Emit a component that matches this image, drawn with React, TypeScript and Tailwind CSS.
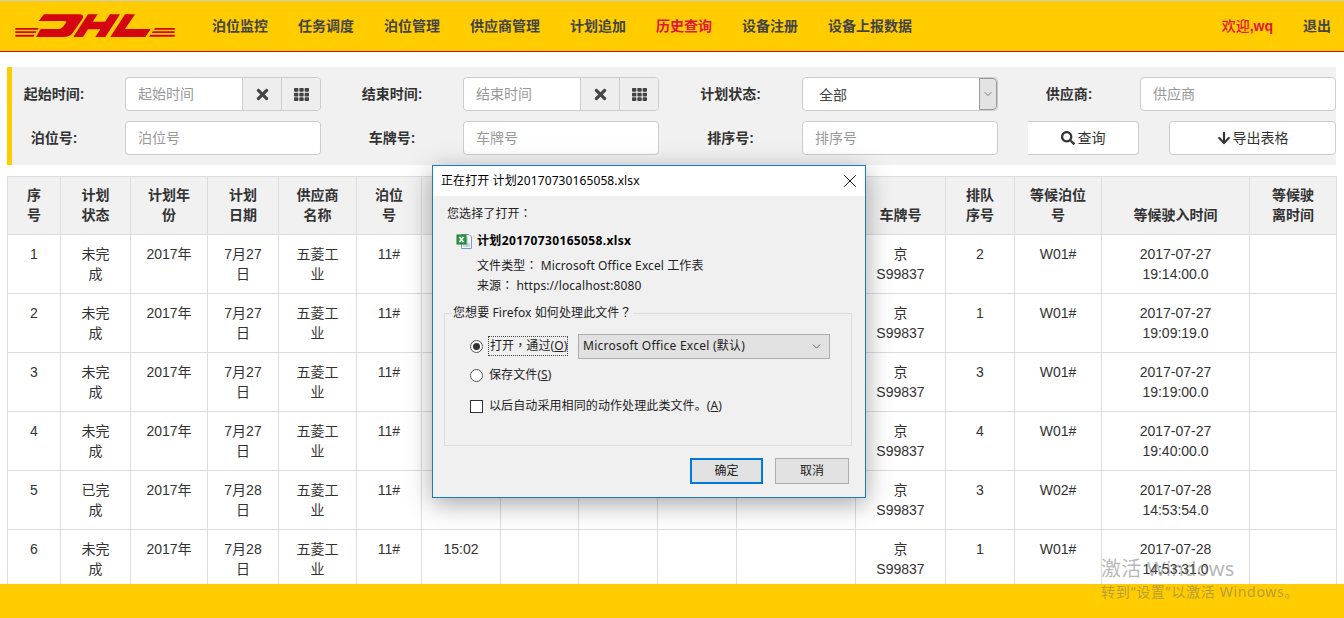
import React from "react";
import { FaTimes, FaTh, FaSearch, FaArrowDown } from "react-icons/fa";
import { ChevronDown, X } from "lucide-react";

const nav = ["泊位监控", "任务调度", "泊位管理", "供应商管理", "计划追加", "历史查询", "设备注册", "设备上报数据"];
const widths = [53, 70, 77, 71, 78, 65, 79, 78, 79, 79, 119, 90, 69, 87, 148, 87];
const heads = ["序号", "计划状态", "计划年份", "计划日期", "供应商名称", "泊位号", "", "", "", "", "", "车牌号", "排队序号", "等候泊位号", "等候驶入时间", "等候驶离时间"];
const rows = [
  ["1", "未完成", "7月27日", "", "2", "W01#", "2017-07-27 19:14:00.0"],
  ["2", "未完成", "7月27日", "", "1", "W01#", "2017-07-27 19:09:19.0"],
  ["3", "未完成", "7月27日", "", "3", "W01#", "2017-07-27 19:19:00.0"],
  ["4", "未完成", "7月27日", "", "4", "W01#", "2017-07-27 19:40:00.0"],
  ["5", "已完成", "7月28日", "", "3", "W02#", "2017-07-28 14:53:54.0"],
  ["6", "未完成", "7月28日", "15:02", "1", "W01#", "2017-07-28 14:53:31.0"],
];

function Logo() {
  return (
    <svg width="175" height="42" viewBox="0 0 525 126" className="shrink-0">
      <g fill="#d40511">
        <path d="M108 28H212Q232 28 223 42L194 84Q186 96 164 96H84L98 72H150Q160 72 165 65L174 53Q178 48 168 48H92Z" />
        <path d="M240 28H269L254 50H291L306 28H336L292 96H262L277 73H240L225 96H196Z" />
        <path d="M351 28H381L351 72H428L412 96H307Z" />
        <path d="M22 69H92L89 74H22ZM22 79H86L83 84H22ZM22 89H80L76 95H22Z" />
        <path d="M441 69H500V74H438ZM434 79H500V84H431ZM427 89H500V95H423Z" />
      </g>
    </svg>
  );
}

function ExcelIcon() {
  return (
    <svg width="17" height="17" viewBox="0 0 17 17" className="shrink-0">
      <path d="M5.5 1.5H13L15.5 4V15.5H5.5Z" fill="#f4f8fc" stroke="#7f9db9" />
      <path d="M7 11H14M7 13H14M11 4V13" stroke="#9db7d3" fill="none" />
      <rect x="1" y="2" width="9" height="9" fill="#2f9e44" stroke="#1e7b34" />
      <path d="M3.5 4L7.5 9M7.5 4L3.5 9" stroke="#fff" strokeWidth="1.4" />
    </svg>
  );
}

function Field({ label, children }: { label: string; children: React.ReactNode }) {
  return (
    <>
      <label className="text-center font-bold text-[14px] text-[#333]">{label}</label>
      {children}
    </>
  );
}

function TextBox({ ph }: { ph: string }) {
  return (
    <div className="h-[34px] rounded border border-[#ccc] bg-white pl-3 flex items-center text-[14px] text-[#999]">{ph}</div>
  );
}

function DateBox({ ph }: { ph: string }) {
  return (
    <div className="h-[34px] flex rounded border border-[#ccc] bg-white text-[14px] text-[#999]">
      <div className="w-[116px] pl-3 flex items-center">{ph}</div>
      <div className="w-[39px] border-l border-[#ccc] bg-[#eee] flex items-center justify-center text-[#444]">
        <FaTimes size={17} />
      </div>
      <div className="flex-1 border-l border-[#ccc] bg-[#eee] rounded-r flex items-center justify-center text-[#444]">
        <FaTh size={15} />
      </div>
    </div>
  );
}

function Radio({ on }: { on?: boolean }) {
  return (
    <span className="w-[13px] h-[13px] rounded-full border border-[#555] bg-white flex items-center justify-center shrink-0">
      {on && <span className="w-[7px] h-[7px] rounded-full bg-[#333]" />}
    </span>
  );
}

function Mark({ c }: { c: string }) {
  return <span className="leading-none [font-family:'Noto_Sans_CJK_TC',sans-serif]">{c}</span>;
}

function Dialog() {
  return (
    <div className="absolute left-[432px] top-[165px] w-[434px] h-[333px] border border-[#1a7cc8] bg-[#f0f0f0] shadow-[0_6px_24px_rgba(0,0,0,0.35)] text-[12px] tracking-[0.1px] text-[#222] [font-family:'Noto_Sans','Noto_Sans_CJK_SC',sans-serif]">
      <div className="h-[30px] bg-white flex items-center justify-between pl-[8px] pr-[4px] text-[12px] text-black">
        <span>正在打开 计划20170730165058.xlsx</span>
        <X size={22} strokeWidth={1} />
      </div>
      <div className="pt-[9px] pl-[11px] pr-[13px]">
        <div className="h-[18px] pl-[3px] leading-[18px]">您选择了打开<Mark c="：" /></div>
        <div className="mt-[9px] pl-[12px] flex items-center gap-[4px] h-[18px] font-bold text-black">
          <ExcelIcon />
          <span className="tracking-[0.35px]">计划20170730165058.xlsx</span>
        </div>
        <div className="mt-[6px] pl-[33px] leading-[20px]">
          <div className="h-[20px]">文件类型<Mark c="：" /> Microsoft Office Excel 工作表</div>
          <div className="h-[20px]">来源<Mark c="：" /> https://localhost:8080</div>
        </div>
        <fieldset className="mt-[8px] h-[142px] border border-[#dcdcdc] pl-[25px] pr-[21px]">
          <legend className="ml-[-18px] px-[1px] h-[18px] leading-[18px]">您想要 Firefox 如何处理此文件<Mark c="？" /></legend>
          <div className="mt-[11px] flex items-center h-[26px]">
            <Radio on />
            <span className="ml-[5px] border border-dotted border-[#444] h-[20px] leading-[17px] w-[80px] pl-[1px] whitespace-nowrap">
              打开<Mark c="，" />通过(<u>O</u>)
            </span>
            <div className="ml-[10px] flex-1 h-[25px] border border-[#adadad] bg-[#e1e1e1] flex items-center justify-between pl-[4px] pr-[6px]">
              <span className="tracking-[0.25px]">Microsoft Office Excel (默认)</span>
              <ChevronDown size={13} strokeWidth={1.2} />
            </div>
          </div>
          <div className="mt-[6px] flex items-center gap-[6px] h-[20px]">
            <Radio />
            <span>保存文件(<u>S</u>)</span>
          </div>
          <div className="mt-[11px] flex items-center gap-[6px] h-[20px]">
            <span className="w-[13px] h-[13px] border border-[#333] bg-white shrink-0" />
            <span>以后自动采用相同的动作处理此类文件。(<u>A</u>)</span>
          </div>
        </fieldset>
        <div className="mt-[12px] flex justify-end gap-[12px] pr-[3px]">
          <div className="w-[73px] h-[26px] border-2 border-[#0078d7] bg-[#e1e1e1] flex items-center justify-center">确定</div>
          <div className="w-[74px] h-[26px] border border-[#adadad] bg-[#e1e1e1] flex items-center justify-center">取消</div>
        </div>
      </div>
    </div>
  );
}

export default function App() {
  return (
    <div className="relative h-screen flex flex-col overflow-hidden bg-white text-[#333] [font-family:'Liberation_Sans','Noto_Sans_CJK_SC',sans-serif]">
      <header className="h-[52px] shrink-0 border-t border-t-[#ccc] border-b border-b-[#c8101e] bg-[#ffcc00] flex items-center pl-[8px] text-[14px] font-bold text-[#444]">
        <Logo />
        <nav className="ml-[29px] flex gap-[30px]">
          {nav.map((n) => (
            <span key={n} className={n === "历史查询" ? "text-[#e0173b]" : ""}>{n}</span>
          ))}
        </nav>
        <span className="ml-auto text-[#e0173b]"><span className="font-medium">欢迎</span>,wq</span>
        <span className="ml-[30px] mr-[13px]">退出</span>
      </header>

      <section className="mt-[15px] ml-[7px] mr-[8px] h-[98px] shrink-0 border-l-[5px] border-l-[#ffcc00] bg-[#f1f1f1] grid grid-cols-[113px_196px_142px_196px_143px_196px_142px_196px] content-center gap-y-[10px] items-center">
        <label className="pr-[29px] text-center font-bold text-[14px]">起始时间:</label>
        <DateBox ph="起始时间" />
        <Field label="结束时间:"><DateBox ph="结束时间" /></Field>
        <Field label="计划状态:">
          <div className="h-[34px] flex rounded border border-[#ccc] bg-white text-[14px] text-[#444]">
            <div className="flex-1 pl-4 pt-[2px] flex items-center">全部</div>
            <div className="w-[18px] border border-[#999] bg-[#e3e3e3] rounded-r flex items-center justify-center">
              <ChevronDown size={12} strokeWidth={1.4} />
            </div>
          </div>
        </Field>
        <Field label="供应商:"><TextBox ph="供应商" /></Field>
        <label className="pr-[29px] text-center font-bold text-[14px]">泊位号:</label>
        <TextBox ph="泊位号" />
        <Field label="车牌号:"><TextBox ph="车牌号" /></Field>
        <Field label="排序号:"><TextBox ph="排序号" /></Field>
        <div className="col-span-2 pl-[30px] flex gap-[30px] text-[14px] text-[#333]">
          <button className="w-[111px] h-[34px] bg-white border border-l-0 border-[#ccc] rounded-r flex items-center justify-center gap-[3px]">
            <FaSearch size={14} />查询
          </button>
          <button className="w-[167px] h-[34px] bg-white border border-[#ccc] rounded flex items-center justify-center gap-[2px]">
            <FaArrowDown size={14} />导出表格
          </button>
        </div>
      </section>

      <main className="mt-[11px] ml-[7px] flex-1 min-h-0 overflow-hidden">
        <table className="w-[1329px] table-fixed border-collapse text-[14px] leading-[20px] text-center">
          <colgroup>
            {widths.map((w, i) => <col key={i} style={{ width: w }} />)}
          </colgroup>
          <thead>
            <tr className="bg-[#f1f1f1]">
              {heads.map((h, i) => (
                <th key={i} className={i === 15 ? "border border-[#ddd] px-[17px] pt-[8px] pb-[9px] align-bottom font-bold" : "border border-[#ddd] px-[15px] pt-[8px] pb-[9px] align-bottom font-bold"}>{h}</th>
              ))}
            </tr>
          </thead>
          <tbody>
            {rows.map((r) => (
              <tr key={r[0]}>
                <td className="border border-[#ddd] px-[15px] py-[9px] align-top">{r[0]}</td>
                <td className="border border-[#ddd] px-[15px] py-[9px] align-top">{r[1]}</td>
                <td className="border border-[#ddd] px-[15px] py-[9px] align-top">2017年</td>
                <td className="border border-[#ddd] px-[15px] py-[9px] align-top">{r[2]}</td>
                <td className="border border-[#ddd] px-[15px] py-[9px] align-top">五菱工业</td>
                <td className="border border-[#ddd] px-[15px] py-[9px] align-top">11#</td>
                <td className="border border-[#ddd] px-[15px] py-[9px] align-top">{r[3]}</td>
                <td className="border border-[#ddd]" />
                <td className="border border-[#ddd]" />
                <td className="border border-[#ddd]" />
                <td className="border border-[#ddd]" />
                <td className="border border-[#ddd] px-[15px] py-[9px] align-top">京 S99837</td>
                <td className="border border-[#ddd] px-[15px] py-[9px] align-top">{r[4]}</td>
                <td className="border border-[#ddd] px-[15px] py-[9px] align-top">{r[5]}</td>
                <td className="border border-[#ddd] px-[15px] py-[9px] align-top">{r[6]}</td>
                <td className="border border-[#ddd]" />
              </tr>
            ))}
          </tbody>
        </table>
      </main>

      <footer className="h-[34px] shrink-0 bg-[#ffcc00]" />

      <Dialog />

      <div className="absolute left-[1101px] top-[555px] text-[rgba(110,110,110,0.5)] [font-family:'Noto_Sans','Noto_Sans_CJK_SC',sans-serif] pointer-events-none">
        <div className="text-[20px] leading-[27px] tracking-[0.3px]">激活 Windows</div>
        <div className="text-[14px] leading-[20px] tracking-[0.7px]">转到“设置”以激活 Windows。</div>
      </div>
    </div>
  );
}
